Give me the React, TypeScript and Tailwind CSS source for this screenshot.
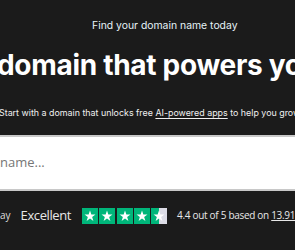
import React from "react";

function Star({ half }: { half?: boolean }) {
  return (
    <div className="relative w-[16px] h-[16px] bg-[#00b67a] overflow-hidden">
      {half && <div className="absolute right-0 top-0 h-full w-[8px] bg-[#dcdce6]" />}
      <svg viewBox="0 0 16 16" className="absolute inset-0 w-full h-full">
        <path
          d="M8 2.6l1.35 3.95h4.1l-3.3 2.4 1.25 3.95L8 10.45l-3.4 2.45 1.25-3.95-3.3-2.4h4.1z"
          fill="#ffffff"
        />
      </svg>
    </div>
  );
}

function Lead({ children }: { children: React.ReactNode }) {
  return <span className="inline-flex w-0 justify-end whitespace-pre">{children}</span>;
}

export default function App() {
  return (
    <div className="w-[295px] h-[250px] overflow-hidden bg-[#1b1b1b] text-white" style={{ fontFamily: "Inter, 'Noto Sans', sans-serif" }}>
      <div className="pt-[19px] flex flex-col">
        <div className="pl-[92px] text-[10.4px] leading-[14px] text-[#e6f3f8] whitespace-nowrap">
          Find your domain name today
        </div>
        <div className="mt-[14px] ml-[-3px] text-[28px] leading-[36px] font-bold whitespace-nowrap tracking-[-0.3px]">
          <Lead>Get a </Lead>domain that powers your business
        </div>
        <div className="mt-[24px] ml-[-1px] text-[8.9px] leading-[12px] text-[#f0f0f0] whitespace-nowrap">
          Start with a domain that unlocks free{" "}
          <span className="underline underline-offset-2">AI-powered apps</span> to help you grow.
        </div>
        <div className="mt-[16px] ml-[-40px] w-[400px] h-[56px] bg-white border-y-2 border-[#c8c8c8] flex items-center">
          <span className="pl-[40px] text-[13px] text-[#767676] whitespace-nowrap" style={{ fontFamily: "'Open Sans', sans-serif" }}>
            <Lead>Enter your domain </Lead>name...
          </span>
        </div>
        <div className="mt-[15px] flex items-center whitespace-nowrap" style={{ fontFamily: "'Open Sans', sans-serif" }}>
          <span className="text-[10px] text-[#dddddd]"><Lead>Our customers s</Lead>ay</span>
          <span className="ml-[10px] text-[13px] tracking-[-0.4px] text-[#e8e8e8]">Excellent</span>
          <div className="ml-[11px] flex gap-[1.25px]">
            <Star />
            <Star />
            <Star />
            <Star />
            <Star half />
          </div>
          <span className="ml-[10px] text-[10px] tracking-[-0.3px] text-[#e8e8e8]">
            4.4 out of 5 based on <span className="underline">13.916 reviews</span>
          </span>
        </div>
      </div>
    </div>
  );
}
